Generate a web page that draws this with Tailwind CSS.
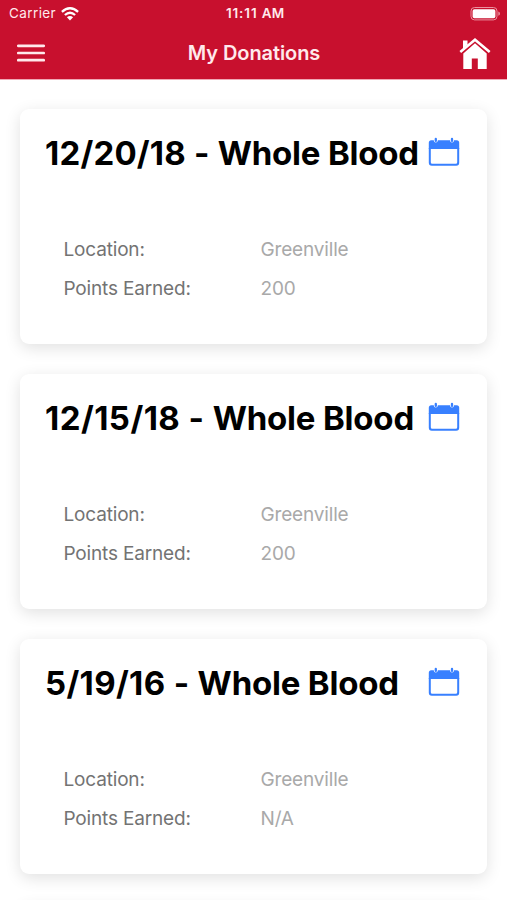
<!DOCTYPE html>
<html lang="en">
<head>
<meta charset="utf-8">
<title>My Donations</title>
<script src="https://cdn.jsdelivr.net/npm/@tailwindcss/browser@4"></script>
</head>
<body class="bg-white font-['Inter','Liberation_Sans',sans-serif] w-[507px] h-[900px] overflow-hidden flex flex-col">
<svg class="hidden">
  <symbol id="calendar" viewBox="0 0 32 30">
    <path d="M.8 12V5.800q0-2.500 2.500-2.500h25.400q2.500 0 2.500 2.500V12z" fill="#3880ff"/>
    <path d="M.8 11V25.700q0 3 3 3h24.400q3 0 3-3V11h-2v14.200q0 1.500-1.500 1.500H4.300q-1.500 0-1.500-1.500V11z" fill="#3880ff"/>
    <path d="M7.800 3.600V2.200M24 3.600V2.200" stroke="#fff" stroke-width="4" stroke-linecap="round"/>
    <path d="M7.800 3.900V2M24 3.900V2" stroke="#3880ff" stroke-width="2.300" stroke-linecap="round"/>
  </symbol>
</svg>
<header class="h-[80px] shrink-0 bg-[#c8102e] border-b border-[#f0a9b5] text-[#ffe9ec]">
  <div class="h-[27px] grid grid-cols-3 items-center pl-[9px] pr-[6px] text-[13.5px]">
    <div class="flex items-center gap-[5px]">
      <span class="tracking-[0.4px]">Carrier</span>
      <svg class="w-[18px] h-[14px]" viewBox="0 0 18 14" fill="none" stroke="#fff" stroke-width="2.300">
        <path d="M.9 4.900Q9-2.500 17.100 4.900M3.900 8Q9 3.400 14.100 8"/>
        <path d="M5.900 10.300Q9 7.500 12.100 10.300L9 13.500z" fill="#fff" stroke="none"/>
      </svg>
    </div>
    <span class="text-center font-semibold text-[13.5px] tracking-[0.9px] whitespace-nowrap">11:11 <span class="tracking-normal">AM</span></span>
    <svg class="justify-self-end w-[31px] h-[14px]" viewBox="0 0 31 14">
      <rect x="1" y=".5" width="26" height="12.400" rx="3.500" fill="none" stroke="#eb929f"/>
      <rect x="2.600" y="2.200" width="22.800" height="9" rx="1.800" fill="#fff"/>
      <path d="M28.300 4.600q1.700.6 1.700 2.100t-1.700 2.100z" fill="#eb929f"/>
    </svg>
  </div>
  <div class="h-[51px] flex items-center justify-between pl-[17px] pr-[16px]">
    <svg class="w-[28px] h-[20px]" viewBox="0 0 28 20" stroke="#ffe9ec" stroke-width="2.700" stroke-linecap="round"><path d="M1.300 2.800h25.400M1.300 10h25.400M1.300 17.200h25.400"/></svg>
    <h1 class="text-[20px] font-semibold tracking-[-0.08px] pl-[4px]">My Donations</h1>
    <svg class="w-[32px] h-[32px] mt-[2px]" viewBox="0 0 32 32" fill="#fff">
      <path d="M4.300 15.600 16 5.300l11.700 10.300V31H18.800V20.500h-6V31H4.300z"/>
      <path d="M1.200 14.200 16 1.300l14.800 12.900" fill="none" stroke="#c8102e" stroke-width="4.600"/>
      <path d="M4 11V2.500h4.500v4z"/>
      <path d="M1.300 14 16 1.700 30.700 14" fill="none" stroke="#fff" stroke-width="2.500"/>
    </svg>
  </div>
</header>
<main class="flex-1 min-h-0 overflow-hidden flex flex-col gap-[30px] px-[20px] pt-[29px]">
  <article class="h-[235px] shrink-0 rounded-[9px] bg-white shadow-[0_4px_16px_rgba(0,0,0,0.12)] pl-[25px] pr-[27px] pt-[22px]">
    <div class="flex h-[44px] items-center justify-between">
      <h2 class="pt-px text-[33px] font-bold text-black whitespace-pre"><span class="tracking-[0.2px]">12/20/18 - </span><span class="tracking-[-0.2px]">Whole Blood</span></h2>
      <svg class="w-[32px] h-[30px] shrink-0 -mt-[2px]"><use href="#calendar"/></svg>
    </div>
    <dl class="mt-[56px] pl-[18.500px] grid grid-cols-[197px_1fr] auto-rows-[39px] items-center text-[19px] tracking-[-0.17px] text-[#737373]">
      <dt>Location:</dt><dd class="text-[#a9a9a9]">Greenville</dd>
      <dt>Points Earned:</dt><dd class="text-[#a9a9a9]">200</dd>
    </dl>
  </article>
  <article class="h-[235px] shrink-0 rounded-[9px] bg-white shadow-[0_4px_16px_rgba(0,0,0,0.12)] pl-[25px] pr-[27px] pt-[22px]">
    <div class="flex h-[44px] items-center justify-between">
      <h2 class="pt-px text-[33px] font-bold text-black whitespace-pre"><span class="tracking-[0.45px]">12/15/18 - </span><span class="tracking-[-0.2px]">Whole Blood</span></h2>
      <svg class="w-[32px] h-[30px] shrink-0 -mt-[2px]"><use href="#calendar"/></svg>
    </div>
    <dl class="mt-[56px] pl-[18.500px] grid grid-cols-[197px_1fr] auto-rows-[39px] items-center text-[19px] tracking-[-0.17px] text-[#737373]">
      <dt>Location:</dt><dd class="text-[#a9a9a9]">Greenville</dd>
      <dt>Points Earned:</dt><dd class="text-[#a9a9a9]">200</dd>
    </dl>
  </article>
  <article class="h-[235px] shrink-0 rounded-[9px] bg-white shadow-[0_4px_16px_rgba(0,0,0,0.12)] pl-[25px] pr-[27px] pt-[22px]">
    <div class="flex h-[44px] items-center justify-between">
      <h2 class="pt-px text-[33px] font-bold text-black whitespace-pre"><span class="tracking-[0.35px]">5/19/16 - </span><span class="tracking-[-0.2px]">Whole Blood</span></h2>
      <svg class="w-[32px] h-[30px] shrink-0 -mt-[2px]"><use href="#calendar"/></svg>
    </div>
    <dl class="mt-[56px] pl-[18.500px] grid grid-cols-[197px_1fr] auto-rows-[39px] items-center text-[19px] tracking-[-0.17px] text-[#737373]">
      <dt>Location:</dt><dd class="text-[#a9a9a9]">Greenville</dd>
      <dt>Points Earned:</dt><dd class="text-[#a9a9a9]">N/A</dd>
    </dl>
  </article>
  <div class="h-[235px] shrink-0 rounded-[9px] bg-white shadow-[0_4px_16px_rgba(0,0,0,0.12)]"></div>
</main>
</body>
</html>
